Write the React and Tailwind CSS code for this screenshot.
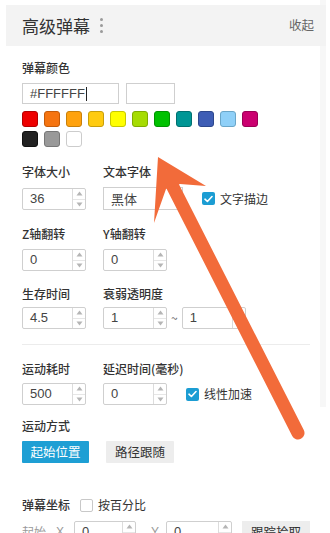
import React from "react";

const Tri = ({ up }) => (
  <svg width="7" height="5" viewBox="0 0 7 5">
    {up ? <path d="M3.5 0.5 L6.5 4.5 L0.5 4.5 Z" fill="#b5b5b5" /> : <path d="M0.5 0.5 L6.5 0.5 L3.5 4.5 Z" fill="#b5b5b5" />}
  </svg>
);

function Spin({ v, w = "w-[64px]" }) {
  return (
    <div className={`flex ${w} h-[22px] border border-[#cfcfcf] rounded-[2px] bg-white`}>
      <div className="flex-1 pl-[7px] text-[13px] leading-[20px] text-[#444] font-['Liberation_Sans','Noto_Sans_CJK_SC',sans-serif]">{v}</div>
      <div className="w-[13px] border-l border-[#dcdcdc] flex flex-col">
        <div className="flex-1 flex items-center justify-center border-b border-[#e6e6e6]"><Tri up /></div>
        <div className="flex-1 flex items-center justify-center"><Tri /></div>
      </div>
    </div>
  );
}

function Check({ on }) {
  return on ? (
    <div className="w-[13px] h-[13px] rounded-[2px] bg-[#1c9dd3] flex items-center justify-center">
      <svg width="9" height="8" viewBox="0 0 9 8"><path d="M1 4.2 L3.4 6.5 L8 1.5" stroke="white" strokeWidth="1.6" fill="none" strokeLinecap="round" strokeLinejoin="round" /></svg>
    </div>
  ) : (
    <div className="w-[13px] h-[13px] rounded-[2px] border border-[#c8c8c8] bg-white" />
  );
}

const swatches = ["#ee0000", "#f57410", "#ffa20e", "#ffcb10", "#ffff00", "#a6dc02", "#00c100", "#009695", "#3e5db5", "#8fd0f8", "#cb0070"];
const swatchBorders = ["#b30000", "#c45a08", "#c8800a", "#c89e0a", "#c8c800", "#80ac00", "#009300", "#007070", "#2d478c", "#6aa6c8", "#9a0055"];

const Label = ({ children, className = "" }) => (
  <div className={`text-[12px] leading-[18px] text-[#333] font-medium ${className}`}>{children}</div>
);

export default function App() {
  return (
    <div className="w-[330px] h-[533px] overflow-hidden bg-white relative font-['Noto_Sans_CJK_SC','Noto_Sans',sans-serif]">
      <div className="w-[326px] border-r-[6px] border-[#f7f7f7] pb-[2px]">
        <div className="pt-[5px] pl-[6px]">
          <div className="h-[41px] w-[320px] bg-[#f3f3f3] flex items-center pl-[16px] pr-[12px]">
            <div className="text-[17px] text-[#333] leading-none">高级弹幕</div>
            <div className="ml-[10px] flex flex-col gap-[3px]">
              <div className="w-[3px] h-[3px] rounded-full bg-[#9a9a9a]" />
              <div className="w-[3px] h-[3px] rounded-full bg-[#9a9a9a]" />
              <div className="w-[3px] h-[3px] rounded-full bg-[#9a9a9a]" />
            </div>
            <div className="ml-auto text-[12.5px] text-[#666]">收起</div>
          </div>
        </div>

        <div className="pl-[22px]">
          <Label className="mt-[13px]">弹幕颜色</Label>
          <div className="flex mt-[6px] gap-[7px]">
            <div className="w-[97px] h-[21px] border border-[#cfcfcf] pl-[7px] text-[13px] leading-[19px] text-[#444] font-['Liberation_Sans',sans-serif] flex items-center">
              #FFFFFF<span className="w-[1px] h-[14px] bg-[#222] ml-[1px]" />
            </div>
            <div className="w-[49px] h-[21px] border border-[#cfcfcf]" />
          </div>
          <div className="mt-[7px] flex gap-[6px]">
            {swatches.map((c, i) => (
              <div key={c} className="w-[16px] h-[16px] rounded-[3px] border" style={{ backgroundColor: c, borderColor: swatchBorders[i] }} />
            ))}
          </div>
          <div className="mt-[4px] flex gap-[6px]">
            <div className="w-[16px] h-[16px] rounded-[3px] border border-[#111] bg-[#222]" />
            <div className="w-[16px] h-[16px] rounded-[3px] border border-[#777] bg-[#999]" />
            <div className="w-[16px] h-[16px] rounded-[3px] border border-[#ccc] bg-white" />
          </div>

          <div className="mt-[16px] flex">
            <div className="w-[81px]">
              <Label>字体大小</Label>
              <div className="mt-[7px]"><Spin v="36" /></div>
            </div>
            <div>
              <Label>文本字体</Label>
              <div className="mt-[6px] flex items-center">
                <div className="w-[80px] h-[23px] border border-[#cfcfcf] pl-[7px] text-[13px] leading-[21px] text-[#444] flex items-center">
                  黑体
                  <svg className="ml-auto mr-[4px]" width="7" height="5" viewBox="0 0 7 5"><path d="M0.5 0.5 L6.5 0.5 L3.5 4.5 Z" fill="#999" /></svg>
                </div>
                <div className="ml-[19px] flex items-center gap-[5px]">
                  <Check on />
                  <span className="text-[12px] text-[#333]">文字描边</span>
                </div>
              </div>
            </div>
          </div>

          <div className="mt-[15px] flex">
            <div className="w-[81px]">
              <Label>Z轴翻转</Label>
              <div className="mt-[6px]"><Spin v="0" /></div>
            </div>
            <div>
              <Label>Y轴翻转</Label>
              <div className="mt-[6px]"><Spin v="0" /></div>
            </div>
          </div>

          <div className="mt-[14px] flex">
            <div className="w-[81px]">
              <Label>生存时间</Label>
              <div className="mt-[4px]"><Spin v="4.5" /></div>
            </div>
            <div>
              <Label>衰弱透明度</Label>
              <div className="mt-[4px] flex items-center">
                <Spin v="1" />
                <span className="mx-[4px] text-[12px] text-[#666]">~</span>
                <Spin v="1" />
              </div>
            </div>
          </div>

          <div className="mt-[15px] mr-[10px] border-t border-[#ececec]" />

          <div className="mt-[15px] flex">
            <div className="w-[81px]">
              <Label>运动耗时</Label>
              <div className="mt-[5px]"><Spin v="500" /></div>
            </div>
            <div>
              <Label>延迟时间(毫秒)</Label>
              <div className="mt-[5px] flex items-center">
                <Spin v="0" />
                <div className="ml-[19px] flex items-center gap-[5px]">
                  <Check on />
                  <span className="text-[12px] text-[#333]">线性加速</span>
                </div>
              </div>
            </div>
          </div>
        </div>
      </div>

      <div className="pl-[22px]">
        <Label className="mt-[10px]">运动方式</Label>
        <div className="mt-[6px] flex gap-[17px]">
          <div className="w-[67px] h-[22px] bg-[#1e9fd4] text-white text-[12.5px] flex items-center justify-center rounded-[1px]">起始位置</div>
          <div className="w-[68px] h-[22px] bg-[#ededed] text-[#333] text-[12.5px] flex items-center justify-center rounded-[1px]">路径跟随</div>
        </div>

        <div className="mt-[33px] flex items-center">
          <Label>弹幕坐标</Label>
          <div className="ml-[10px]"><Check /></div>
          <span className="ml-[5px] text-[12px] text-[#333]">按百分比</span>
        </div>
        <div className="mt-[7px] flex items-center text-[12px] text-[#999]">
          <span>起始</span>
          <span className="ml-[10px] font-['Liberation_Sans',sans-serif]">X</span>
          <div className="ml-[10px]"><Spin v="0" w="w-[62px]" /></div>
          <span className="ml-[15px] font-['Liberation_Sans',sans-serif]">Y</span>
          <div className="ml-[7px]"><Spin v="0" w="w-[66px]" /></div>
          <div className="ml-[10px] w-[68px] h-[22px] bg-[#ededed] text-[#333] text-[12.5px] flex items-center justify-center">跟踪拾取</div>
        </div>
      </div>

      <svg className="absolute inset-0 pointer-events-none" width="330" height="533" viewBox="0 0 330 533">
        <line x1="173" y1="187" x2="298" y2="433" stroke="#f26b3a" strokeWidth="13" strokeLinecap="round" />
        <polygon points="158,157 206,186 180,184 166,189 154,223" fill="#f26b3a" />
      </svg>
    </div>
  );
}
